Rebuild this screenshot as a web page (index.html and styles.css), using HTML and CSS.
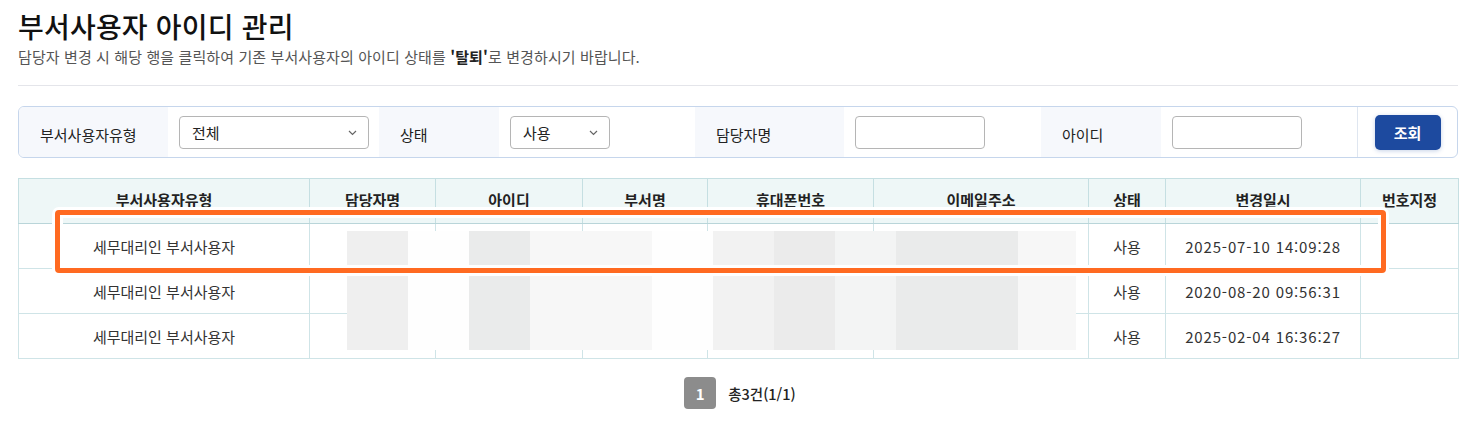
FILE: index.html
```html
<!DOCTYPE html>
<html lang="ko">
<head>
<meta charset="utf-8">
<link rel="stylesheet" href="styles.css">
</head>
<body>
<div class="page">
  <header class="head">
    <h1 class="title">부서사용자 아이디 관리</h1>
    <p class="desc">담당자 변경 시 해당 행을 클릭하여 기존 부서사용자의 아이디 상태를 <b>'탈퇴'</b>로 변경하시기 바랍니다.</p>
  </header>
  <hr class="rule">
  <div class="search">
    <div class="lab w149">부서사용자유형</div>
    <div class="fld w211"><div class="sel s190"><span>전체</span><svg class="chev" width="9" height="6" viewBox="0 0 9 6"><path d="M1 1l3.5 3.5L8 1" fill="none" stroke="#666" stroke-width="1.2"/></svg></div></div>
    <div class="lab w120">상태</div>
    <div class="fld w196"><div class="sel s100"><span>사용</span><svg class="chev" width="9" height="6" viewBox="0 0 9 6"><path d="M1 1l3.5 3.5L8 1" fill="none" stroke="#666" stroke-width="1.2"/></svg></div></div>
    <div class="lab w149">담당자명</div>
    <div class="fld w197"><div class="inp"></div></div>
    <div class="lab w120">아이디</div>
    <div class="fld w196"><div class="inp"></div></div>
    <div class="btncell"><button class="btn">조회</button></div>
  </div>
  <div class="tablewrap">
    <table class="grid">
      <colgroup>
        <col style="width:291px"><col style="width:126px"><col style="width:147px"><col style="width:125px"><col style="width:166px"><col style="width:215px"><col style="width:77px"><col style="width:195px"><col style="width:98px">
      </colgroup>
      <thead>
        <tr><th>부서사용자유형</th><th>담당자명</th><th>아이디</th><th>부서명</th><th>휴대폰번호</th><th>이메일주소</th><th>상태</th><th>변경일시</th><th>번호지정</th></tr>
      </thead>
      <tbody>
        <tr><td>세무대리인 부서사용자</td><td></td><td></td><td></td><td></td><td></td><td>사용</td><td class="date">2025-07-10 14:09:28</td><td></td></tr>
        <tr><td>세무대리인 부서사용자</td><td></td><td></td><td></td><td></td><td></td><td>사용</td><td class="date">2020-08-20 09:56:31</td><td></td></tr>
        <tr><td>세무대리인 부서사용자</td><td></td><td></td><td></td><td></td><td></td><td>사용</td><td class="date">2025-02-04 16:36:27</td><td></td></tr>
      </tbody>
    </table>
    <div class="mosaic">
      <div class="tile c1"></div><div class="tile c0"></div><div class="tile c3"></div><div class="tile c5"></div><div class="tile c5"></div><div class="tile c0"></div>
      <div class="tile c2"></div><div class="tile c4"></div><div class="tile c6"></div><div class="tile c3"></div><div class="tile c3"></div><div class="tile c5 last"></div>
    </div>
    <div class="highlight"></div>
  </div>
  <div class="pager">
    <span class="pgnum">1</span>
    <span class="pgtotal">총3건(1/1)</span>
  </div>
</div>
</body>
</html>
```
FILE: styles.css
```css
* { box-sizing: border-box; }
html, body { margin: 0; padding: 0; background: #fff; }
body { font-family: "Noto Sans CJK KR", "Noto Sans", sans-serif; color: #222; }
.page { padding: 0 18px; width: 1476px; }
.head { padding-top: 7px; }
.title { margin: 0; font-size: 28px; font-weight: 500; line-height: 38px; color: #111; letter-spacing: 0.2px; }
.desc { margin: 1px 0 0; font-size: 15px; line-height: 21px; color: #555; letter-spacing: 0.1px; }
.desc b { color: #222; font-weight: 700; }
.rule { margin: 18px 0 0; border: 0; border-top: 1px solid #e4e5ea; height: 0; }
.search { margin-top: 20px; display: flex; height: 52px; border: 1px solid #c6d6ec; border-radius: 6px; overflow: hidden; }
.lab { background: #f6f8fc; display: flex; align-items: center; padding: 4px 0 0 21px; font-size: 15px; color: #222; }
.fld { display: flex; align-items: center; padding-left: 11px; background: #fff; }
.w149 { width: 149px; }
.w211 { width: 211px; }
.w120 { width: 120px; }
.w196 { width: 196px; }
.w197 { width: 197px; }
.sel { height: 33px; border: 1px solid #b5b5b5; border-radius: 4px; display: flex; align-items: center; justify-content: space-between; padding: 0 11px 0 12px; font-size: 15px; color: #222; }
.s190 { width: 190px; }
.s100 { width: 100px; }
.chev { display: block; margin-top: 1px; }
.inp { width: 130px; height: 33px; border: 1px solid #b5b5b5; border-radius: 4px; }
.btncell { width: 100px; border-left: 1px solid #dfe6f0; display: flex; align-items: center; justify-content: center; }
.btn { width: 66px; height: 35px; background: #1d4a9f; color: #fff; border: 0; border-radius: 5px; font-family: inherit; font-size: 15px; font-weight: 700; box-shadow: 0 1px 4px rgba(29,74,159,0.25); padding: 0; }
.tablewrap { position: relative; margin-top: 20px; }
.grid { width: 1440px; table-layout: fixed; border-collapse: collapse; border: 1px solid #b3d1d5; font-size: 15px; }
.grid th { height: 45px; background: #eef7f7; font-weight: 600; color: #222; border: 1px solid #c5dfe2; border-bottom-color: #b9d5d9; padding: 0 0 4px; text-align: center; }
.grid td { height: 45px; border: 1px solid #cfe4e7; text-align: center; color: #333; padding: 0; }
.grid td.date { letter-spacing: 0.85px; }
.mosaic { position: absolute; left: 329px; top: 53px; width: 729px; height: 119px; display: flex; background: #fff; }
.tile { width: 61px; height: 100%; }
.tile.last { width: 58px; }
.c0 { background: #fefefe; }
.c1 { background: #efefef; }
.c2 { background: #f2f2f2; }
.c3 { background: #eaebeb; }
.c4 { background: #ebebeb; }
.c5 { background: #f7f7f7; }
.c6 { background: #f3f4f4; }
.highlight { position: absolute; left: 37px; top: 32px; width: 1331px; height: 63px; border: 5px solid #ff6a21; border-radius: 4px; box-shadow: 0 0 0 3px #fff, inset 0 0 0 3px #fff; }
.pager { margin-top: 18px; display: flex; justify-content: center; align-items: center; gap: 12px; padding-left: 4px; }
.pgnum { width: 32px; height: 32px; border-radius: 4px; background: #8c8c8c; color: #fff; font-weight: 700; font-size: 15px; display: flex; align-items: center; justify-content: center; }
.pgtotal { font-size: 14.5px; color: #222; font-weight: 500; }
```
